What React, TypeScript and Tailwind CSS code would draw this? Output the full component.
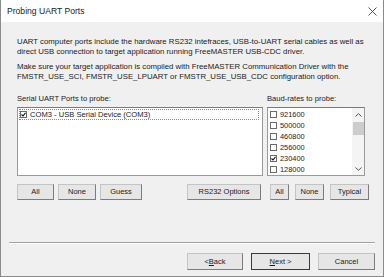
import React from 'react';

const font = { fontFamily: '"Liberation Sans", Arial, sans-serif' };

const bauds = [
  { rate: '921600', checked: false },
  { rate: '500000', checked: false },
  { rate: '460800', checked: false },
  { rate: '256000', checked: false },
  { rate: '230400', checked: true },
  { rate: '128000', checked: false },
];

const Check: React.FC<{ checked?: boolean }> = ({ checked }) => (
  <span className="w-[7px] h-[7px] border border-[#6a6a6a] bg-white flex items-center justify-center shrink-0">
    {checked && (
      <svg width="5" height="5" viewBox="0 0 5 5">
        <path d="M0.5 2.5 L2 4 L4.5 0.8" fill="none" stroke="#111" strokeWidth="1.1" />
      </svg>
    )}
  </span>
);

const Btn: React.FC<{ w: string; children: React.ReactNode; primary?: boolean; h?: string }> = ({ w, children, primary, h }) => (
  <div
    className={`${w} ${h ?? 'h-[16px]'} flex items-center justify-center text-[7.5px] text-[#1a1a1a] bg-[#e6e6e6] border ${
      primary ? 'border-[#3a3a3a]' : 'border-[#c4c4c4] border-r-[#7c7c7c] border-b-[#7c7c7c]'
    }`}
  >
    {children}
  </div>
);

export default function App() {
  return (
    <div className="w-[384px] h-[277px] bg-[#f0f0f0] border-x border-b border-[#8a8a8a] flex flex-col overflow-hidden" style={font}>
      <div className="h-[22px] bg-white flex items-center justify-between pl-[6px] pr-[6px] shrink-0">
        <span className="text-[8.6px] text-[#222]">Probing UART Ports</span>
        <svg width="9" height="9" viewBox="0 0 9 9">
          <path d="M0.5 0.5 L8.5 8.5 M8.5 0.5 L0.5 8.5" stroke="#444" strokeWidth="0.9" />
        </svg>
      </div>

      <div className="flex flex-col px-[16px] pt-[15px] text-[7.6px] leading-[10px] text-[#1a1a1a] whitespace-nowrap">
        <p className="text-[7.8px]">
          UART computer ports include the hardware RS232 intefraces, USB-to-UART serial cables as well as
          <br />
          direct USB connection to target application running FreeMASTER USB-CDC driver.
        </p>
        <p className="mt-[5px] text-[7.8px]">
          Make sure your target application is compiled with FreeMASTER Communication Driver with the
          <br />
          FMSTR_USE_SCI, FMSTR_USE_LPUART or FMSTR_USE_USB_CDC configuration option.
        </p>

        <div className="grid grid-cols-[246px_102px] gap-x-[4px] mt-[12px]">
          <div>Serial UART Ports to probe:</div>
          <div>Baud-rates to probe:</div>

          <div className="mt-[3px] h-[69px] bg-white border border-[#9a9a9a] border-t-[#7a7a7a] p-[1px] pr-[3px]">
            <div className="h-[11px] border border-dotted border-[#8a8a8a] flex items-center gap-[3px]">
              <Check checked />
              <span>COM3 - USB Serial Device (COM3)</span>
            </div>
          </div>
          <div className="mt-[3px] h-[69px] w-[98px] bg-white border border-[#9a9a9a] border-t-[#7a7a7a] flex">
            <div className="flex-1 flex flex-col pt-[1px] pl-[2px]">
              {bauds.map((b) => (
                <div key={b.rate} className="h-[11.5px] flex items-center gap-[3px]">
                  <Check checked={b.checked} />
                  <span className="text-[7.4px]">{b.rate}</span>
                </div>
              ))}
            </div>
            <div className="w-[12px] bg-[#f4f4f4] flex flex-col items-center">
              <svg width="7" height="4" viewBox="0 0 7 4" className="mt-[5px]">
                <path d="M0.5 3.5 L3.5 0.7 L6.5 3.5" fill="none" stroke="#555" strokeWidth="1" />
              </svg>
              <div className="w-[11px] h-[13px] bg-[#cdcdcd] mt-[5px]" />
              <div className="flex-1" />
              <svg width="7" height="4" viewBox="0 0 7 4" className="mb-[4px]">
                <path d="M0.5 0.5 L3.5 3.3 L6.5 0.5" fill="none" stroke="#555" strokeWidth="1" />
              </svg>
            </div>
          </div>

          <div className="mt-[8px] flex items-center justify-between pr-[2px]">
            <div className="flex gap-[4px]">
              <Btn w="w-[37px]">All</Btn>
              <Btn w="w-[38px]">None</Btn>
              <Btn w="w-[42px]">Guess</Btn>
            </div>
            <Btn w="w-[74px]">RS232 Options</Btn>
          </div>
          <div className="mt-[8px] flex items-center gap-[6px] pl-[3px]">
            <Btn w="w-[19px]">All</Btn>
            <Btn w="w-[29px]">None</Btn>
            <Btn w="w-[39px]">Typical</Btn>
          </div>
        </div>
      </div>

      <div className="mt-[42px] mx-[8px] border-t border-[#a0a0a0] border-b border-b-white" />

      <div className="mt-[9px] flex justify-end gap-[8px] pr-[8px]">
        <Btn w="w-[56px]" h="h-[17px]">
          &lt; <span className="underline">B</span>ack
        </Btn>
        <Btn w="w-[59px]" h="h-[17px]" primary>
          <span className="underline">N</span>ext &gt;
        </Btn>
        <Btn w="w-[57px]" h="h-[17px]">
          Cancel
        </Btn>
      </div>
    </div>
  );
}
